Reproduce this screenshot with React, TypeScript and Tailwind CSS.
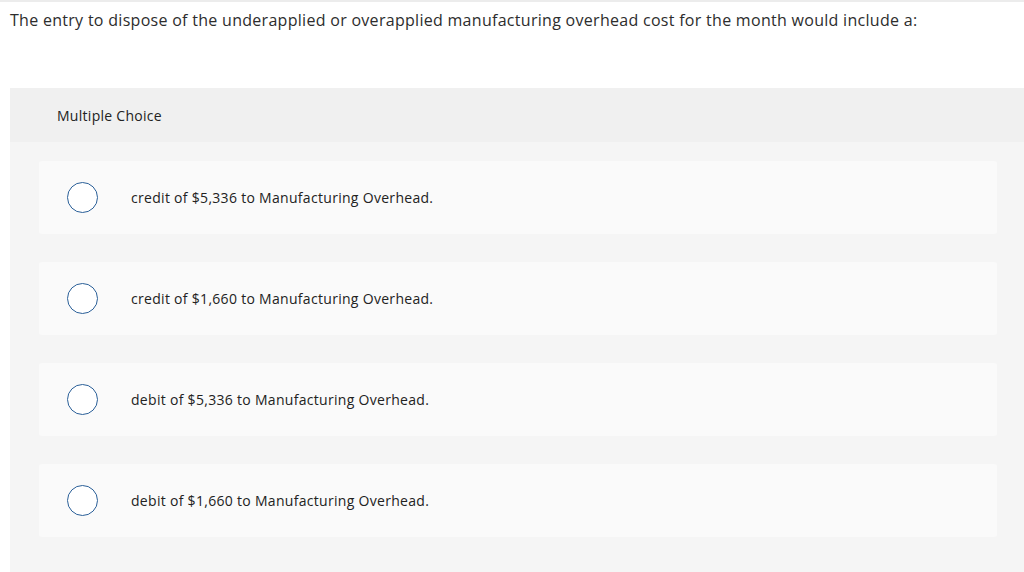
import React from "react";

const options = [
  "credit of $5,336 to Manufacturing Overhead.",
  "credit of $1,660 to Manufacturing Overhead.",
  "debit of $5,336 to Manufacturing Overhead.",
  "debit of $1,660 to Manufacturing Overhead.",
];

export default function App() {
  return (
    <div
      className="w-[1024px] h-[572px] overflow-hidden bg-white text-[#333]"
      style={{ fontFamily: '"Open Sans", "Liberation Sans", sans-serif' }}
    >
      <div className="border-t-2 border-[#ececec] h-[88px] pl-[10px] pt-[6px]">
        <p className="text-[16px] leading-[24px] text-[#2d2d2d] tracking-[0.29px]">
          The entry to dispose of the underapplied or overapplied manufacturing overhead cost for the month would include a:
        </p>
      </div>
      <div className="ml-[10px] bg-[#f5f5f5] h-[484px]">
        <div className="h-[54px] bg-[#f0f0f0] pl-[47px] flex items-center text-[14px] text-[#222] tracking-[0.28px]">
          Multiple Choice
        </div>
        <div className="pt-[19px] pl-[29px] pr-[27px] flex flex-col gap-[28px]">
          {options.map((o) => (
            <div
              key={o}
              className="h-[73px] bg-[#fafafa] rounded-[3px] flex items-center pl-[28px]"
            >
              <span className="w-[31px] h-[31px] rounded-full border-[1.5px] border-[#2a5f98] bg-white shrink-0" />
              <span className="ml-[33px] text-[14px] text-[#222] tracking-[0.3px]">{o}</span>
            </div>
          ))}
        </div>
      </div>
    </div>
  );
}
